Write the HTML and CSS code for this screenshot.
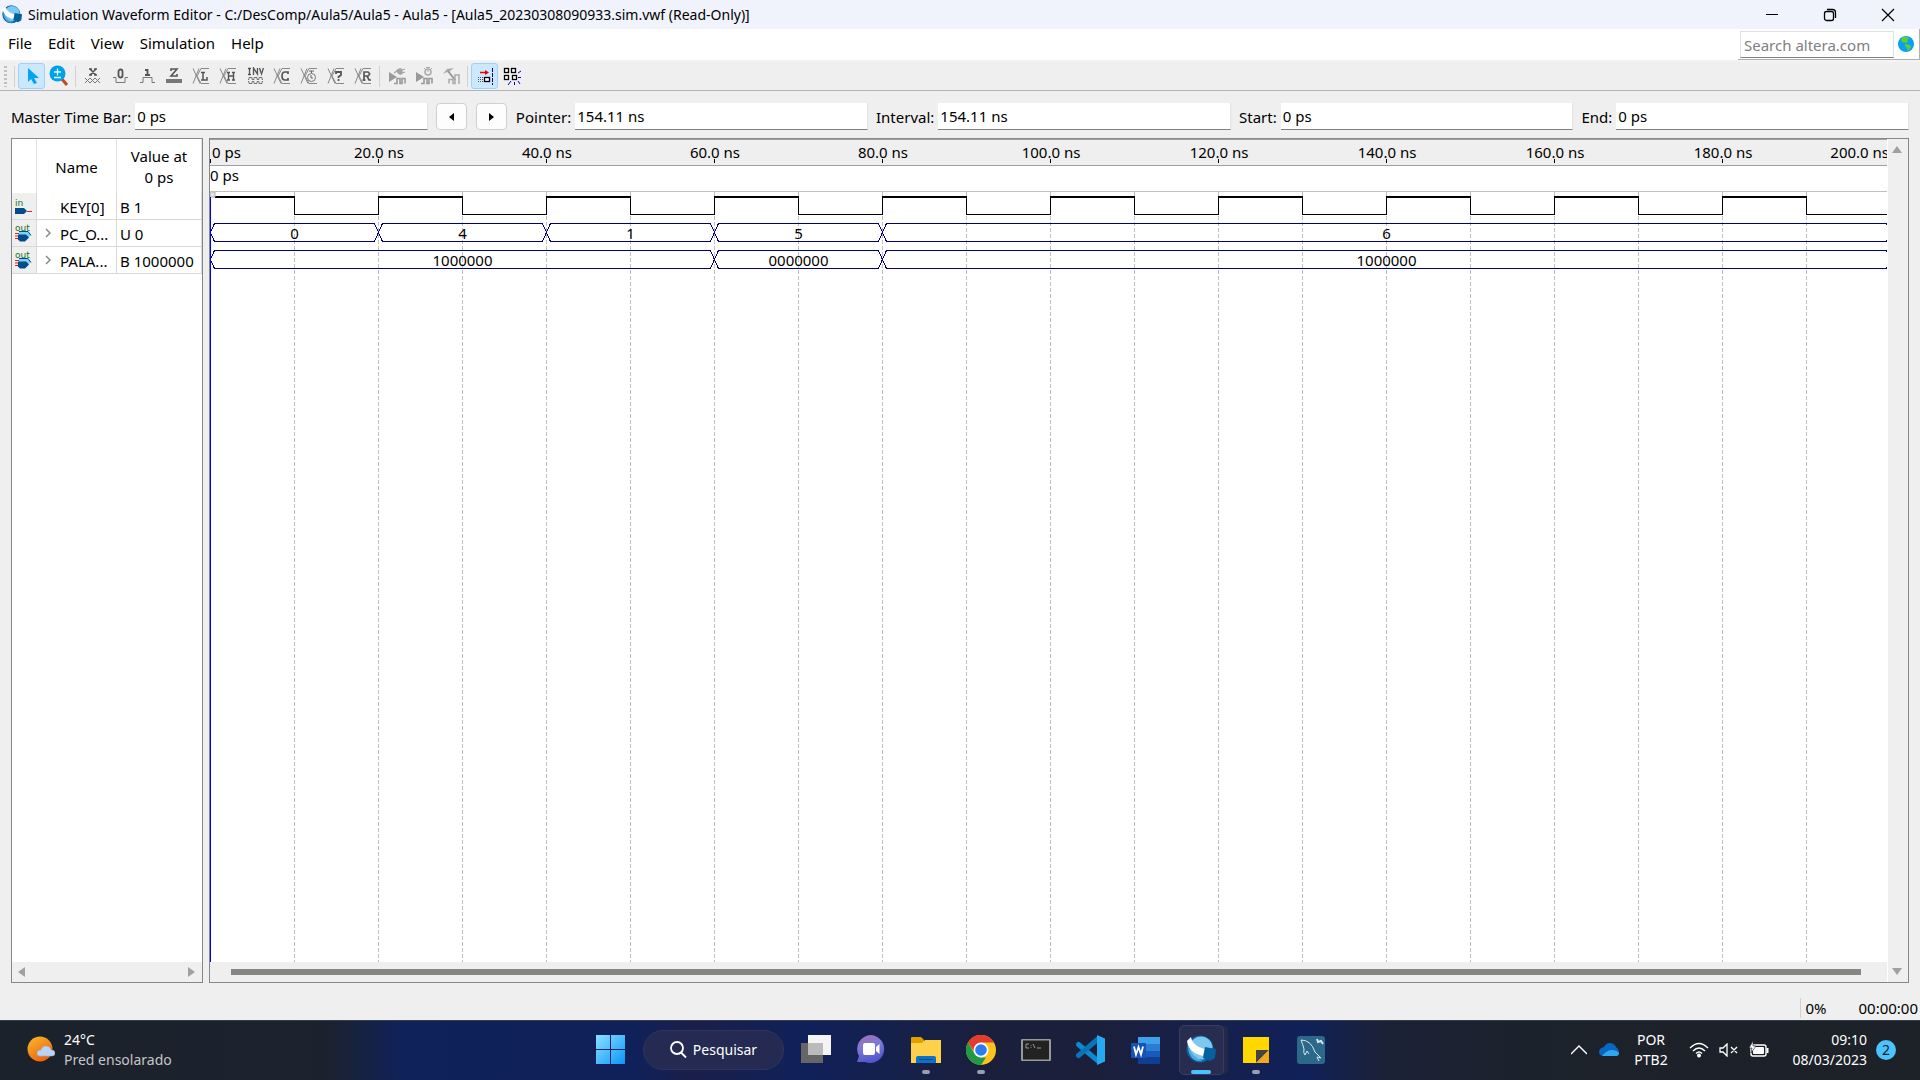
FILE: index.html
```html
<!DOCTYPE html>
<html lang="en">
<head>
<meta charset="utf-8">
<title>Simulation Waveform Editor</title>
<link rel="stylesheet" href="styles.css">
</head>
<body>
<svg class="defs" width="0" height="0" aria-hidden="true">
  <defs>
    <symbol id="globe-app" viewBox="0 0 30 30">
      <circle cx="14" cy="14" r="13.500" fill="#0b63a4"/>
      <circle cx="15" cy="13" r="11.500" fill="#7cc8f0"/>
      <path d="M2 8c1 9 7 15 15 18-9 2-16-5-15-18z" fill="#4da9df"/>
      <path d="M1 6l4-4c1 6 6 10 14 12l-2 7C8 19 2 14 1 6z" fill="#fff"/>
      <path d="M19 12l11 2-1 9-5 3-7-3z" fill="#05609f"/>
    </symbol>
    <symbol id="pin-out" viewBox="0 0 17 11">
      <path d="M4 1h9l3 3-4 5H4z" fill="#7fd0f5"/>
      <path d="M0 3h4M0 5.500h4M0 8h4" stroke="#e02020"/>
      <path d="M3 4h8l3 3-4 4H5l-2-2z" fill="#004c8c"/>
      <path d="M4 1h9l3 4" stroke="#004c8c" fill="none"/>
    </symbol>
    <symbol id="cross" viewBox="0 0 18 18"><path d="M1 1.500l7 15M7 1.500l-6 15M9 1.500h8M9 16.500h8M9 1.500L5 9l4 7.500" stroke="#888" fill="none"/></symbol>
    <symbol id="play-wave" viewBox="0 0 18 18"><path d="M1 5l8 5-8 5z" fill="#999"/><path d="M6 16.500h3v-5h3v5h2v-5h3v5" stroke="#999" stroke-width="1.600" fill="none"/></symbol>
  </defs>
</svg>

<header class="titlebar">
  <svg class="app-icon" width="20" height="20"><use href="#globe-app"/></svg>
  <h1 class="title">Simulation Waveform Editor - C:/DesComp/Aula5/Aula5 - Aula5 - [Aula5_20230308090933.sim.vwf (Read-Only)]</h1>
  <button class="win-btn" aria-label="Minimize"><svg width="12" height="12"><path d="M0 5.500h12" stroke="#000"/></svg></button>
  <button class="win-btn" aria-label="Restore"><svg width="14" height="14" fill="none" stroke="#000" stroke-width="1.300"><rect x="1.500" y="3.500" width="9" height="9" rx="2"/><path d="M4 1.500h5.500q3 0 3 3V10"/></svg></button>
  <button class="win-btn" aria-label="Close"><svg width="14" height="14"><path d="M1 1l12 12M13 1L1 13" stroke="#000" stroke-width="1.200"/></svg></button>
</header>

<nav class="menubar">
  <button class="menu">File</button>
  <button class="menu">Edit</button>
  <button class="menu">View</button>
  <button class="menu">Simulation</button>
  <button class="menu">Help</button>
  <div class="search">
    <input class="search-box" type="text" placeholder="Search altera.com" aria-label="Search altera.com">
    <svg width="16" height="16" viewBox="0 0 16 16"><circle cx="8" cy="8" r="8" fill="#0a9ff0"/><path d="M5 1h5l1 2-2 1 1 2-2 1-4-1-1-2zM7 8l5 1 1 2-3 4-1-3-2-2z" fill="#5fd12c"/></svg>
  </div>
</nav>

<div class="toolbar">
  <span class="grip"></span><span class="sep"></span>
  <button class="tool tool-on" aria-label="Selection tool"><svg width="20" height="20"><path d="M6 2v14l3-3 3 5 3-1-3-5h5z" fill="#00a4f4"/></svg></button>
  <button class="tool" aria-label="Zoom tool"><svg width="20" height="22"><path d="M12 13l6 7" stroke="#c8461c" stroke-width="3"/><circle cx="8.500" cy="8.500" r="8" fill="#00a0ee"/><path d="M5 7h7M8.500 3.500v7M5 12.500h7" stroke="#dff" stroke-width="1.300"/></svg></button>
  <span class="sep"></span>
  <button class="tool" aria-label="Forcing unknown"><svg width="18" height="18"><path d="M6 2l6 6M12 2L6 8M5 2h3M10 2h3M5 8h3M10 8h3" stroke="#555" stroke-width="1.500"/><path d="M1 11l5 5 5-5 5 5M1 16l5-5 5 5 5-5" stroke="#777" fill="none"/></svg></button>
  <button class="tool" aria-label="Forcing low"><svg width="18" height="18"><path d="M2 10.500h3v5h9v-5h3" stroke="#777" fill="none"/><rect x="7.500" y="2.500" width="4" height="8" rx="2" fill="none" stroke="#555" stroke-width="1.800"/></svg></button>
  <button class="tool" aria-label="Forcing high"><svg width="18" height="18"><path d="M2 15.500h3v-5h9v5h3" stroke="#777" fill="none"/><path d="M7 3h2.500v5M7 8h5" stroke="#555" stroke-width="1.800" fill="none"/></svg></button>
  <button class="tool" aria-label="High impedance"><svg width="18" height="18"><path d="M6 4V2h6L6 9h6V7" stroke="#555" stroke-width="1.600" fill="none"/><rect x="1" y="12" width="16" height="4" fill="#777"/></svg></button>
  <button class="tool" aria-label="Weak low"><svg width="18" height="18"><use href="#cross"/><path d="M9 5.500h4M11 5v8M9 13h6v-3" stroke="#555" stroke-width="1.500" fill="none"/></svg></button>
  <button class="tool" aria-label="Weak high"><svg width="18" height="18"><use href="#cross"/><path d="M8 5.500h3M13 5.500h3M9.500 5v8M14.500 5v8M9 9h5M8 13h3M13 13h3" stroke="#555" stroke-width="1.400"/></svg></button>
  <button class="tool" aria-label="Invert"><svg width="18" height="18" fill="none" stroke="#555"><path d="M2 1.500h3M3.500 1v6M2 7.500h3M7.500 8V1l4 6V1M13.500 1l2 6 2-6" stroke-width="1.300"/><path d="M2 12.500h1v-2h3v2h2v-2h3v2h2v-2h3v2h1M2 14.500h1v2h3v-2h2v2h3v-2h2v2h3v-2h1" stroke="#777"/></svg></button>
  <button class="tool" aria-label="Count value"><svg width="18" height="18"><use href="#cross"/><path d="M15 7V5h-3q-3 0-3 4t3 4h3v-2" stroke="#555" stroke-width="1.700" fill="none"/></svg></button>
  <button class="tool" aria-label="Overwrite clock"><svg width="18" height="18"><use href="#cross"/><circle cx="11.500" cy="10.500" r="4" fill="#efefef" stroke="#777"/><path d="M9 4h5M11.500 4v2M11 8v3h2" stroke="#666" fill="none"/></svg></button>
  <button class="tool" aria-label="Arbitrary value"><svg width="18" height="18"><use href="#cross"/><path d="M9 7V5h5v3l-2.500 2v1M11.500 12v2" stroke="#555" stroke-width="1.800" fill="none"/></svg></button>
  <button class="tool" aria-label="Random values"><svg width="18" height="18"><use href="#cross"/><path d="M10 14V5h4l1.500 1.500v1L14 9h-4M13 9l2 4h2M8.500 13h3" stroke="#555" stroke-width="1.700" fill="none"/></svg></button>
  <span class="sep"></span>
  <button class="tool" aria-label="Run functional simulation"><svg width="18" height="18"><use href="#play-wave"/><path d="M6 6l3-2M14 3l3-1M14 6l3-1" stroke="#a4a4a4" stroke-width="1.300"/><path d="M8 3l4-2 2 1 1 4-2 2-3-1z" fill="#a4a4a4"/></svg></button>
  <button class="tool" aria-label="Run timing simulation"><svg width="18" height="18"><use href="#play-wave"/><circle cx="13" cy="5" r="3" fill="none" stroke="#aaa" stroke-width="1.500"/><path d="M11 .500h4M9 1l1 1M17 1l-1 1M13 3v2" stroke="#aaa"/></svg></button>
  <button class="tool" aria-label="Generate testbench"><svg width="18" height="18"><path d="M1 7l4-5 7-1-4 3-1 2-2-1z" fill="#aaa"/><path d="M6 4l7 9" stroke="#999" stroke-width="2"/><path d="M7 16.500v-4h4v4h2V8h4v9" stroke="#aaa" stroke-width="1.500" fill="none"/></svg></button>
  <span class="sep"></span>
  <button class="tool tool-on" aria-label="Snap to transition"><svg width="18" height="18"><path d="M4 5.500h7" stroke="#e00" stroke-width="1.500"/><path d="M9 3l4 2.500L9 8z" fill="#e00"/><path d="M16.500 1v17" stroke="#00c" stroke-dasharray="4 1"/><path d="M2 10.500h7M2 14.500h7M2 12.500h6" stroke="#555" stroke-dasharray="1 1"/><rect x="8.500" y="10.500" width="5" height="4" fill="#fff" stroke="#000" stroke-width="1.300"/></svg></button>
  <button class="tool" aria-label="Snap to grid"><svg width="18" height="18"><g fill="#fff" stroke="#000" stroke-width="1.300"><rect x="1.500" y="1.500" width="4" height="4"/><rect x="8.500" y="1.500" width="4" height="4"/><rect x="1.500" y="8.500" width="4" height="4"/><rect x="9.500" y="8.500" width="4" height="4"/></g><path d="M15 6l3-2M15 10.500h3M15 14l2 3M11.500 15v3M8 14l-3 4" stroke="#00c"/></svg></button>
</div>

<main class="work">
  <form class="fields">
    <label for="mtb">Master Time Bar:</label><input class="field" id="mtb" value="0 ps">
    <button class="step" type="button" aria-label="Previous transition"><svg width="5" height="8"><path d="M5 0v8L0 4z"/></svg></button>
    <button class="step" type="button" aria-label="Next transition"><svg width="5" height="8"><path d="M0 0v8l5-4z"/></svg></button>
    <label for="ptr">Pointer:</label><input class="field" id="ptr" value="154.11 ns">
    <label for="int">Interval:</label><input class="field" id="int" value="154.11 ns">
    <label for="start">Start:</label><input class="field" id="start" value="0 ps">
    <label for="end">End:</label><input class="field" id="end" value="0 ps">
  </form>

  <div class="panels">
    <section class="signals">
      <table class="signal-table">
        <colgroup><col class="col-icon"><col class="col-name"><col></colgroup>
        <thead><tr><th></th><th>Name</th><th>Value at<br>0 ps</th></tr></thead>
        <tbody>
          <tr>
            <td class="pin"><svg width="20" height="24"><text class="pin-label" x="0" y="12">in</text><path d="M0 14h9l3 3-3 3H0z" fill="#004c8c"/><path d="M12 17.500h5" stroke="#e02020"/></svg></td>
            <td class="name">KEY[0]</td><td class="value">B 1</td>
          </tr>
          <tr>
            <td class="pin"><svg width="20" height="24"><use href="#pin-out" y="9" width="17" height="12"/><text class="pin-label" x="0" y="10">out</text></svg></td>
            <td class="name"><svg class="expand" width="6" height="10"><path d="M1 1l4 4-4 4" stroke="#888" stroke-width="1.500" fill="none"/></svg>PC_O...</td><td class="value">U 0</td>
          </tr>
          <tr>
            <td class="pin"><svg width="20" height="24"><use href="#pin-out" y="9" width="17" height="12"/><text class="pin-label" x="0" y="10">out</text></svg></td>
            <td class="name"><svg class="expand" width="6" height="10"><path d="M1 1l4 4-4 4" stroke="#888" stroke-width="1.500" fill="none"/></svg>PALA...</td><td class="value">B 1000000</td>
          </tr>
        </tbody>
      </table>
      <div class="hscroll hscroll-small">
        <svg width="8" height="10"><path d="M7 0v10L0 5z" fill="#a0a0a0"/></svg>
        <svg width="8" height="10"><path d="M0 0v10l7-5z" fill="#a0a0a0"/></svg>
      </div>
    </section>

    <section class="waves">
      <div class="wave-column">
        <svg class="ruler" width="100%" height="53">
          <rect width="100%" height="27" fill="#efefef"/>
          <path d="M0 .5h4000M0 26.500h4000" stroke="#a0a0a0"/>
          <path d="M0 52.500h4000" stroke="#c0c0c0"/>
          <g id="ticks"></g>
          <text x="0" y="42">0 ps</text>
        </svg>
        <svg class="plot" width="100%" id="plot"></svg>
        <div class="hscroll"><span class="thumb"></span></div>
      </div>
      <div class="vscroll">
        <svg width="10" height="8"><path d="M0 7h10L5 0z" fill="#a0a0a0"/></svg>
        <svg width="10" height="8"><path d="M0 0h10L5 7z" fill="#a0a0a0"/></svg>
      </div>
    </section>
  </div>

  <footer class="status"><span class="percent">0%</span><span>00:00:00</span></footer>
</main>

<div class="taskbar">
  <a class="weather" href="#">
    <svg width="28" height="28"><defs><linearGradient id="sun" x2=".6" y2="1"><stop stop-color="#f6bd2c"/><stop offset="1" stop-color="#f0620c"/></linearGradient></defs><circle cx="13" cy="13" r="12.500" fill="url(#sun)"/><path d="M13 20q-3 0-3-3t4-3q1-4 5-4t5 4q4 0 4 3t-3 3z" fill="#bcd2f6" stroke="#8fb0ea" stroke-width=".6"/></svg>
    <span>24°C<br><span class="dim">Pred ensolarado</span></span>
  </a>

  <div class="apps">
    <button class="app" aria-label="Start"><svg width="30" height="30"><defs><linearGradient id="win" x2="1" y2="1"><stop stop-color="#8be0ff"/><stop offset="1" stop-color="#0a96f8"/></linearGradient></defs><path d="M0 0h14v14H0zM15 0h14v14H15zM0 15h14v14H0zM15 15h14v14H15z" fill="url(#win)"/></svg></button>
    <button class="find"><svg width="18" height="18" fill="none" stroke="#fff" stroke-width="1.800"><circle cx="8" cy="7" r="6"/><path d="M12 11.500l5 5"/></svg>Pesquisar</button>
    <button class="app" aria-label="Task view"><svg width="30" height="30"><rect y="8" width="22" height="20" fill="#666"/><rect x="7" width="23" height="20" fill="#f4f4f4"/><rect x="7" y="8" width="15" height="12" fill="#bbb"/></svg></button>
    <button class="app" aria-label="Chat"><svg width="30" height="30"><defs><linearGradient id="chat" x2=".3" y2="1"><stop stop-color="#a56fb0"/><stop offset=".5" stop-color="#7b78d8"/><stop offset="1" stop-color="#5456cc"/></linearGradient></defs><path d="M15 0a14 14 0 1 1-6 27H1l2-6A14 14 0 0 1 15 0z" fill="url(#chat)"/><rect x="7" y="8" width="12" height="12" rx="2" fill="#fff"/><path d="M20 12l3.500-3v10L20 16z" fill="#fff"/></svg></button>
    <button class="app running" aria-label="File Explorer"><svg width="30" height="28"><path d="M0 2q0-1 1-1h9l3 3v6H0z" fill="#e0a000"/><path d="M0 7h11l3-3h16v23H0z" fill="#ffd04a"/><path d="M5 27v-5q0-2 2-2h16q2 0 2 2v5z" fill="#0b72c8"/><path d="M8 23.500h14" stroke="#08488c"/></svg></button>
    <button class="app running" aria-label="Chrome"><svg width="30" height="30" viewBox="0 0 30 30"><circle cx="15" cy="15" r="15" fill="#fcc31e"/><path d="M2 7.500A15 15 0 0 1 28 7.500H15L9 18z" fill="#e33b2e"/><path d="M2 7.500L8.600 18.700 15 22.500h5L15 30A15 15 0 0 1 2 7.500z" fill="#219a48"/><circle cx="15" cy="15" r="7.500" fill="#fff"/><circle cx="15" cy="15" r="5.800" fill="#2d7bf0"/></svg></button>
    <button class="app" aria-label="Command prompt"><svg width="30" height="22"><rect x="1" y=".5" width="28" height="21" rx="1" fill="#222" stroke="#999" stroke-width="2"/><path d="M8 5H5v4h3M10 6v.800M10 8v.800M12 5l2 4M16 9h4" stroke="#999" fill="none"/></svg></button>
    <button class="app" aria-label="Visual Studio Code"><svg width="30" height="30"><path d="M2.500 9.500L22 26" stroke="#0d88d2" stroke-width="5" stroke-linecap="round"/><path d="M2.500 20.500L22 4" stroke="#0a74ba" stroke-width="5" stroke-linecap="round"/><path d="M21 0l8 3.500v23L21 30z" fill="#27a8f2"/></svg></button>
    <button class="app" aria-label="Word"><svg width="30" height="28"><path d="M7 1h22v7H7z" fill="#3fa0ec"/><path d="M7 8h22v7H7z" fill="#2b7cd3"/><path d="M7 15h22v6H7z" fill="#185abd"/><path d="M7 21h22v7H7z" fill="#103f91"/><rect y="7" width="15" height="15" rx="1" fill="#1553b4"/><path d="M3 10.500l2 8 2.500-7.500 2.500 7.500 2-8" fill="none" stroke="#fff" stroke-width="1.800"/></svg></button>
    <button class="app running active" aria-label="Simulation Waveform Editor"><svg width="30" height="30"><use href="#globe-app"/></svg></button>
    <button class="app running" aria-label="Sticky Notes"><svg width="26" height="26"><path d="M0 0h26v14L14 26H0z" fill="#ffd800"/><path d="M13 13h13L13 26z" fill="#444"/><path d="M26 13v13H13z" fill="#f0a81c"/></svg></button>
    <button class="app" aria-label="MySQL Workbench"><svg width="28" height="28" fill="none" stroke="#d6e6ee"><rect width="28" height="28" rx="3" fill="#2c688a" stroke="none"/><path d="M4 4q10 0 14 12l6 6-4-1 2 4M4 4q2 5 3 9-1 4 1 6l2-4 2 3"/><path d="M20 3l1 3 3-1 2 3" stroke-width="2"/></svg></button>
  </div>

  <div class="tray">
    <button class="tray-btn" aria-label="Show hidden icons"><svg width="16" height="10"><path d="M0 9l8-8 8 8" stroke="#fff" stroke-width="1.400" fill="none"/></svg></button>
    <svg class="cloud" width="20" height="14"><path d="M5 13q-5 0-5-4t5-5q2-4 6-4t6 4q3 2 3 5t-3 4z" fill="#0a66c0"/><path d="M3 13q4-5 9-6 6 0 8 3 0 3-3 3z" fill="#30a8f0"/></svg>
    <span class="lang">POR<br>PTB2</span>
    <svg class="wifi" width="20" height="16" fill="none" stroke="#fff" stroke-width="1.400"><path d="M1 6q9-9 18 0M4 9q6-6 12 0M7 11.500q3-3 6 0"/><circle cx="10" cy="13.500" r="1.300" fill="#fff"/></svg>
    <svg class="sound" width="20" height="14" fill="none" stroke="#fff" stroke-width="1.300"><path d="M1 5h3l4-4v12L4 9H1zM12 4l6 6M18 4l-6 6"/></svg>
    <svg class="battery" width="20" height="17"><rect x="2" y="4" width="15" height="11" rx="2" fill="none" stroke="#fff" stroke-width="1.400"/><rect x="4" y="6" width="11" height="7" rx="1" fill="#fff"/><path d="M18.500 7v5" stroke="#fff" stroke-width="2"/><path d="M4 0L0 7h3l-1 5 5-7H4z" fill="#fff" stroke="#1c222b" stroke-width=".6"/></svg>
    <span class="clock">09:10<br>08/03/2023</span>
    <span class="badge">2</span>
  </div>
</div>
<script src="waves.js"></script>
</body>
</html>
```
FILE: styles.css
```css
* { box-sizing: border-box; }
body {
  margin: 0;
  min-height: 100vh;
  display: flex;
  flex-direction: column;
  background: #efefef;
  color: #000;
  font: 15px/20px "Noto Sans", sans-serif;
}
button, input { font: inherit; color: inherit; }
button { padding: 0; border: 0; background: none; }
svg { display: block; flex: none; }
.defs { position: absolute; }

.titlebar { display: flex; align-items: center; height: 29px; background: #f0f3fb; }
.app-icon { margin: 0 6px 0 2px; }
.title { flex: 1; margin: 0; font-size: 14px; font-weight: 400; white-space: nowrap; overflow: hidden; }
.win-btn { display: flex; align-items: center; justify-content: center; width: 58px; height: 29px; }
.win-btn:last-child { margin-right: 3px; }

.menubar { display: flex; height: 33px; background: #fff; border-bottom: 2px solid #f3f3f3; }
.menu { height: 28px; padding: 0 8px; }
.search { display: flex; align-items: center; gap: 4px; margin-left: auto; height: 31px; padding: 0 5px 0 2px; border-right: 1px solid #b0b0b0; border-bottom: 1px solid #b0b0b0; }
.search-box { width: 154px; height: 27px; padding: 2px 3px 0; border: 1px solid #e0e0e0; border-bottom-color: #808080; }
.search-box::placeholder { color: #808080; }

.toolbar { display: flex; align-items: center; height: 29px; padding-left: 4px; border-bottom: 1px solid #b4b4b4; }
.grip { width: 3px; height: 21px; margin-right: 4px; background: repeating-linear-gradient(#c0c0c0 0 2px, transparent 2px 4px); }
.sep { width: 7px; height: 21px; background: linear-gradient(#d0d0d0, #d0d0d0) center / 1px 100% no-repeat; }
.tool { display: flex; align-items: center; justify-content: center; width: 27px; height: 26px; }
.tool-on { background: #cce8ff; border: 1px solid #99d1ff; border-radius: 3px; }

.work { flex: 1; display: flex; flex-direction: column; }
.fields { display: flex; align-items: center; padding: 12px 11px 8px; }
.fields label { margin-right: 4px; }
.field { flex: 1; min-width: 0; height: 27px; margin-right: 8px; padding: 0 2px; background: #fff; border: 0; border-right: 1px solid #e4e4e4; border-bottom: 1px solid #808080; }
.field:last-child { margin-right: 0; }
.step { display: flex; align-items: center; justify-content: center; width: 31px; height: 27px; margin-right: 9px; background: #fdfdfd; border: 1px solid #d0d0d0; border-radius: 4px; }

.panels { flex: 1; display: flex; gap: 6px; padding: 0 11px; }
.signals, .waves { border: 1px solid #828790; background: #fff; }
.signals { display: flex; flex-direction: column; width: 192px; }
.signal-table { width: 190px; table-layout: fixed; border-collapse: separate; border-spacing: 0; }
.col-icon { width: 25px; }
.col-name { width: 80px; }
.signal-table th { height: 54px; padding: 2px 0 0; border-right: 1px solid #e0e0e0; font-weight: 400; line-height: 21px; }
.signal-table td { height: 27px; padding: 2px 0 0; border-right: 1px solid #d8d8d8; border-bottom: 1px solid #d8d8d8; }
.signal-table .pin { padding: 0 0 0 3px; background: #efefef; }
.pin-label { font: 9px "DejaVu Sans", sans-serif; fill: #207020; }
.signal-table .name { position: relative; padding-left: 23px; }
.expand { position: absolute; left: 8px; top: 8px; }
.signal-table .value { padding-left: 3px; }
.hscroll { display: flex; align-items: center; height: 20px; padding: 0 26px 0 21px; background: #efefef; }
.hscroll-small { justify-content: space-between; margin-top: auto; padding: 0 6px; }
.thumb { flex: 1; height: 6px; background: #868683; }

.waves { flex: 1; display: flex; min-width: 0; }
.wave-column { flex: 1; display: flex; flex-direction: column; min-width: 0; }
.ruler, .plot { font: 15px "Noto Sans", sans-serif; }
.plot { flex: 1; }
.vscroll { display: flex; flex-direction: column; align-items: center; justify-content: space-between; width: 21px; padding: 7px 2px 6px 0; background: #efefef; border-left: 1px solid #fff; }

.status { display: flex; justify-content: flex-end; align-items: flex-end; height: 37px; padding: 0 2px 2px 0; }
.percent { width: 58px; padding-left: 4px; border-left: 1px solid #d0d0d0; }

.taskbar {
  display: grid;
  grid-template-columns: 1fr auto 1fr;
  align-items: center;
  height: 60px;
  padding-bottom: 2px;
  border-top: 1px solid #30404c;
  background: linear-gradient(90deg, #1c222b 0, #1b222e 17%, #10225a 21%, #10215a 33%, #1a1f4a 36%, #10215a 42%, #1a1f3c 51%, #1b1f3a 57%, #10215a 68%, #1b2136 72%, #1c222b 80%, #1d2128 100%);
  color: #fff;
  font-size: 14px;
}
.weather { display: flex; align-items: center; gap: 9px; padding-left: 27px; color: #fff; text-decoration: none; }
.dim { color: #c4c6ca; }
.apps { display: flex; align-items: center; padding-left: 2px; }
.app { position: relative; display: flex; align-items: center; justify-content: center; width: 55px; height: 50px; }
.running::after { content: ""; position: absolute; bottom: 1px; width: 8px; height: 4px; border-radius: 2px; background: #9a9eb0; }
.active { width: 45px; margin: 0 5px; border: 1px solid #383c60; border-radius: 5px; background: #282c4e; box-shadow: 5px 0 0 -1px #242848; }
.active::after { bottom: 0; width: 20px; background: #4cc2ff; }
.find { display: flex; align-items: center; justify-content: center; gap: 6px; width: 141px; height: 40px; margin: 0 5px 0 4px; border: 1px solid #30345c; border-radius: 20px; background: #242a52; }
.tray { display: flex; align-items: center; justify-content: flex-end; padding-right: 24px; }
.cloud { margin-left: 12px; }
.lang { width: 64px; text-align: center; }
.wifi { margin-left: 6px; }
.sound, .battery { margin-left: 10px; }
.clock { width: 98px; text-align: right; }
.badge { width: 20px; height: 20px; margin-left: 9px; border-radius: 50%; background: #4cc2ff; color: #10202c; text-align: center; }
```
FILE: waves.js
```javascript
const NS = "http://www.w3.org/2000/svg";
const PX_PER_NS = 8.4;
const END = 200;
const x = (ns) => Math.round(ns * PX_PER_NS);

function add(parent, tag, attrs, text) {
  const el = document.createElementNS(NS, tag);
  for (const key in attrs) el.setAttribute(key, attrs[key]);
  if (text) el.textContent = text;
  parent.appendChild(el);
}

// Time ruler; the last label ends at the edge of the view
const ticks = document.getElementById("ticks");
for (let t = 0; t <= END; t += 20) {
  const label = t === 0 ? "0 ps" : t.toFixed(1) + " ns";
  const edge = t === 0 ? { x: 2, anchor: "start" } : t === END ? { x: 1679, anchor: "end" } : { x: x(t) + 1, anchor: "middle" };
  add(ticks, "text", { x: edge.x, y: 19, "text-anchor": edge.anchor }, label);
  add(ticks, "path", { d: `M${x(t) + 0.5} 20v4`, stroke: "#000" });
}

// Grid
const plot = document.getElementById("plot");
for (let t = 10; t < END; t += 10) {
  add(plot, "line", { x1: x(t) + 0.5, x2: x(t) + 0.5, y1: 0, y2: "100%", stroke: "#c0c0c0", "stroke-dasharray": "4 2" });
}

// Clock, toggling every 10 ns
for (let t = 0; t < END; t += 10) {
  const high = t % 20 === 0;
  add(plot, "rect", { x: t ? x(t) : 5, y: high ? 4 : 22, width: t ? 84 : 79, height: high ? 2 : 1 });
  if (t) add(plot, "rect", { x: x(t), y: 4, width: 1, height: 19 });
}
add(plot, "path", { d: "M0 0h5v5H0z", fill: "#e4e4e4", stroke: "#b0b0b0" });

// Buses: [from, to, value]
function bus(top, spans) {
  for (const [from, to, value] of spans) {
    const a = x(from) + 0.5, b = x(to) + 0.5, y = top + 0.5;
    add(plot, "path", { d: `M${a} ${y + 9}l4 -9H${b - 4}l4 9l-4 9H${a + 4}z`, fill: "none", stroke: "#000080", "shape-rendering": "crispEdges" });
    add(plot, "text", { x: (a + b) / 2, y: top + 16, "text-anchor": "middle" }, value);
  }
}
bus(31, [[0, 20, "0"], [20, 40, "4"], [40, 60, "1"], [60, 80, "5"], [80, 200, "6"]]);
bus(58, [[0, 60, "1000000"], [60, 80, "0000000"], [80, 200, "1000000"]]);

// Master time bar
add(plot, "line", { x1: 0.5, x2: 0.5, y1: 5, y2: "100%", stroke: "#0000ff" });
```
